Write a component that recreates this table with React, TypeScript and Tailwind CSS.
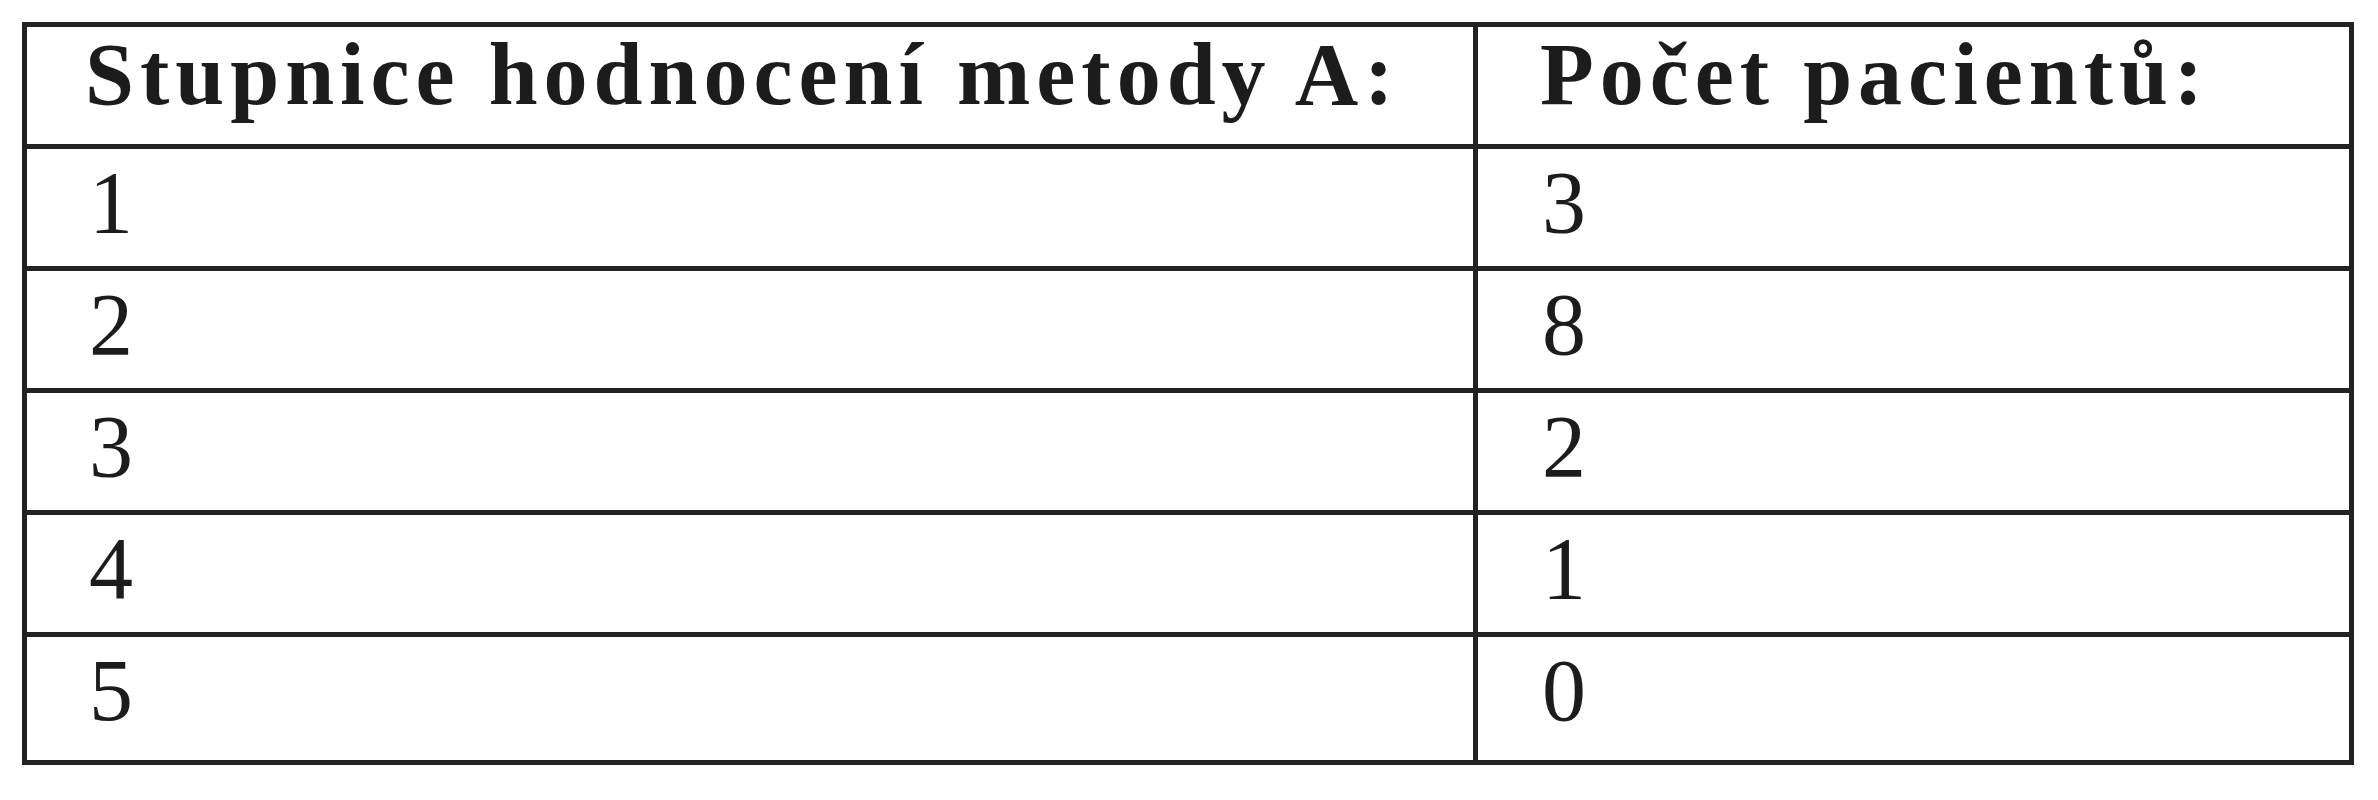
const rows = [
  { grade: "1", count: "3" },
  { grade: "2", count: "8" },
  { grade: "3", count: "2" },
  { grade: "4", count: "1" },
  { grade: "5", count: "0" },
];

export default function App() {
  return (
    <div className="w-[2378px] h-[800px] bg-white pt-[22px] pl-[22px] font-['Liberation_Serif',serif] text-[#1c1c1c]">
      <div className="w-[2332px] border-[5px] border-[#222]">
        {/* header */}
        <div className="flex h-[117px]">
          <div className="w-[1451px] shrink-0 border-r-[5px] border-[#222] pl-[58px] pt-[4px] text-[88px] leading-[88px] font-bold tracking-[6px]">
            Stupnice hodnocení metody A:
          </div>
          <div className="flex-1 pl-[62px] pt-[4px] text-[88px] leading-[88px] font-bold tracking-[6px]">
            Počet pacientů:
          </div>
        </div>

        {rows.map((row, i) => (
          <div
            key={row.grade}
            className={`flex border-t-[5px] border-[#222] ${i === rows.length - 1 ? "h-[128px]" : "h-[122px]"}`}
          >
            <div className="w-[1451px] shrink-0 border-r-[5px] border-[#222] pl-[62px] pt-[10px] text-[88px] leading-[88px]">
              {row.grade}
            </div>
            <div className="flex-1 pl-[64px] pt-[10px] text-[88px] leading-[88px]">
              {row.count}
            </div>
          </div>
        ))}
      </div>
    </div>
  );
}
